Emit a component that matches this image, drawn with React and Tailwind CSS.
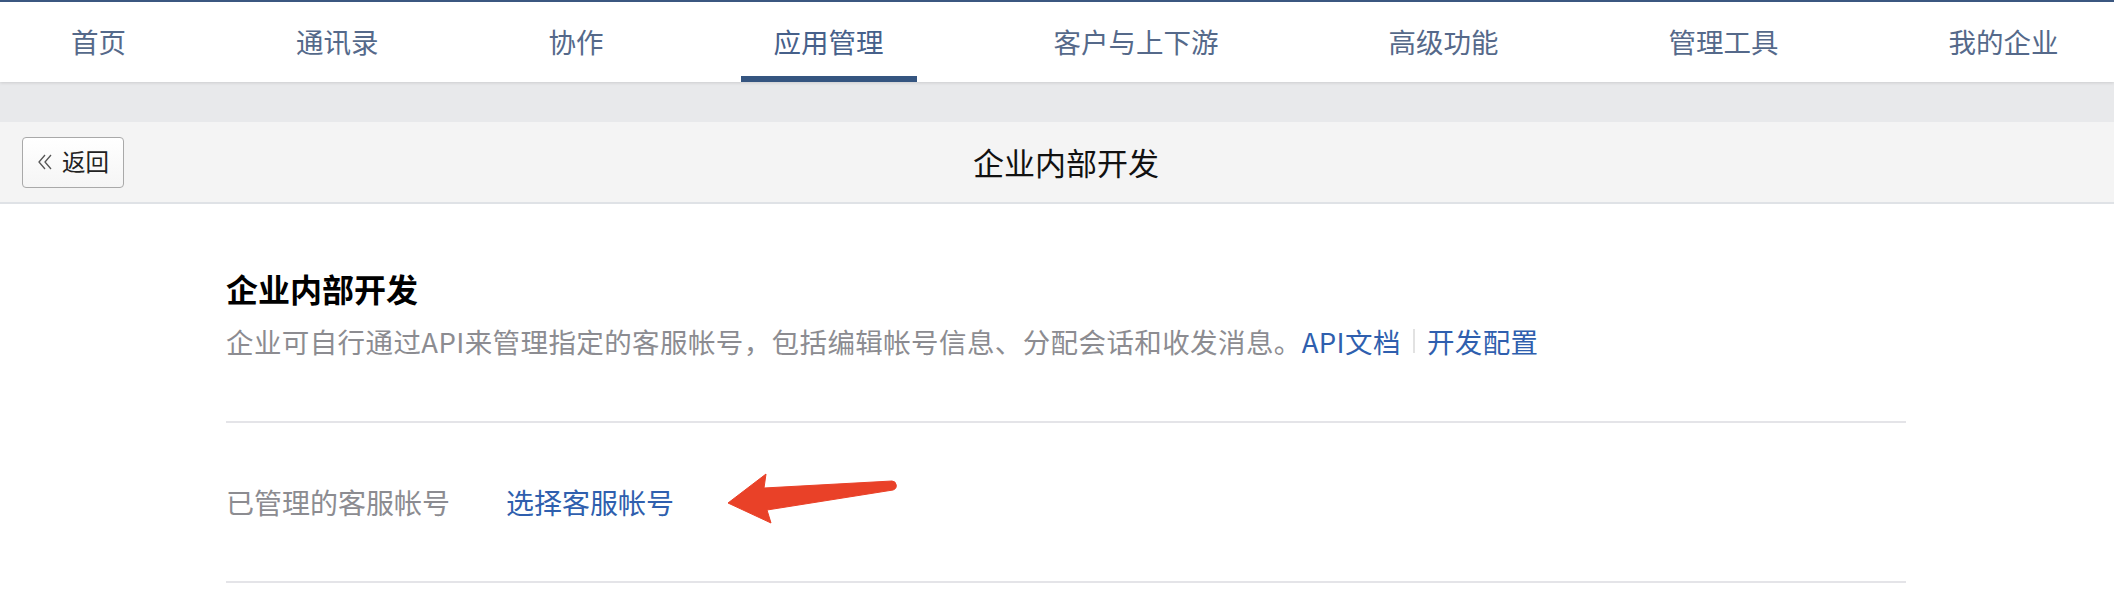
import React from "react";

const NAV = ["首页", "通讯录", "协作", "应用管理", "客户与上下游", "高级功能", "管理工具", "我的企业"];

function Arrow() {
  return (
    <svg width="180" height="62" viewBox="0 0 180 62" className="ml-[50px] shrink-0">
      <path
        d="M4 32 L42 3 L40 17 L168 10 A4.6 4.6 0 0 1 169 19 L43 39 L47 52 Z"
        fill="#e94128"
        stroke="#e94128"
        strokeWidth="1"
        strokeLinejoin="round"
      />
    </svg>
  );
}

function DoubleChevron() {
  return (
    <svg width="16" height="18" viewBox="0 0 16 18" className="shrink-0">
      <path d="M8 2 L2 9 L8 16 M14 2 L8 9 L14 16" fill="none" stroke="#555" strokeWidth="1.3" />
    </svg>
  );
}

export default function App() {
  const font = { fontFamily: '"Noto Sans CJK SC", "Noto Sans", sans-serif' };
  return (
    <div className="w-[2114px] h-[616px] bg-white overflow-hidden" style={font}>
      {/* top nav */}
      <div className="relative z-10 border-t-[2px] border-[#3b5780] bg-white shadow-[0_1px_3px_rgba(0,0,0,0.12)]">
        <div className="flex h-[80px] pl-[38px] gap-[104px]">
          {NAV.map((n) => {
            const active = n === "应用管理";
            return (
              <div
                key={n}
                className={
                  active
                    ? "flex items-center px-[33px] text-[27.5px] text-[#46608a] shadow-[inset_0_-6px_0_#355580]"
                    : "flex items-center px-[33px] text-[27.5px] text-[#55698a]"
                }
              >
                {n}
              </div>
            );
          })}
        </div>
      </div>

      {/* gray band */}
      <div className="h-[40px] bg-[#e8e9eb]" />

      {/* header bar */}
      <div className="h-[82px] bg-[#f4f4f4] border-b-[2px] border-[#dfe2e6] pl-[18px] grid grid-cols-[1fr_auto_1fr] items-center">
        <div className="flex items-center">
          <button className="ml-[4px] h-[51px] pl-[14px] pr-[14px] flex items-center gap-[9px] rounded-[4px] border-[1.5px] border-[#a9a9a9] bg-gradient-to-b from-white to-[#f5f5f5] text-[23.5px] text-[#222]">
            <DoubleChevron />
            <span>返回</span>
          </button>
        </div>
        <div className="text-[31px] text-[#111] leading-[40px]">企业内部开发</div>
        <div />
      </div>

      {/* content */}
      <div className="w-[1680px] ml-[226px] pt-[64px]">
        <div className="text-[32px] font-bold text-black leading-[40px]">企业内部开发</div>
        <div className="mt-[13px] flex items-center text-[27.5px] tracking-[0.4px] leading-[40px] text-[#8c8c91]">
          <span>企业可自行通过API来管理指定的客服帐号，包括编辑帐号信息、分配会话和收发消息。</span>
          <span className="text-[#2f5fae]">API文档</span>
          <span className="mx-[12px] h-[24px] border-l-[2px] border-[#e2e2e2]" />
          <span className="text-[#2f5fae]">开发配置</span>
        </div>
        <div className="mt-[60px] border-t-[2px] border-b-[2px] border-[#e4e4e8] h-[162px] flex items-center text-[28px]">
          <span className="text-[#8c8c91]">已管理的客服帐号</span>
          <span className="ml-[56px] text-[#2f5fae]">选择客服帐号</span>
          <Arrow />
        </div>
      </div>
    </div>
  );
}
